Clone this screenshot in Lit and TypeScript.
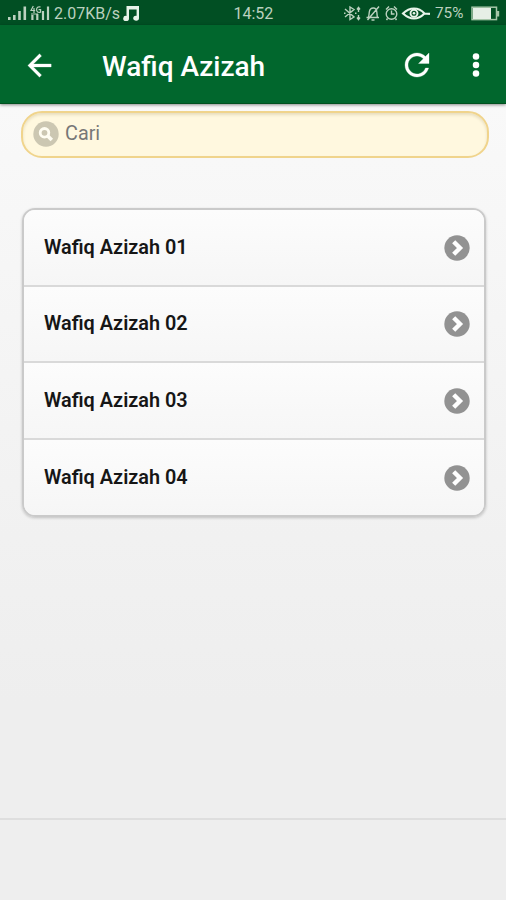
import { LitElement, html, css } from "lit";
import { customElement, property } from "lit/decorators.js";

@customElement("status-bar")
class StatusBar extends LitElement {
  static styles = css`
    :host {
      display: flex;
      align-items: center;
      justify-content: space-between;
      height: 25px;
      padding: 0 6px 0 7px;
      background: #014f23;
      color: #bbd1bf;
      font: 16px/25px Roboto, sans-serif;
    }
    .group { display: flex; align-items: center; height: 25px; }
    .left, .right { flex: 1 1 0; }
    .right { justify-content: flex-end; }
    .text { padding-top: 2px; white-space: nowrap; }
    .speed { width: 66px; margin-left: 4px; }
    .clock { width: 40px; }
    .level { width: 30px; margin: 0 6px 0 4px; font-size: 15.3px; }
    svg { display: block; flex: none; }
    .music { margin-left: 3px; }
  `;
  render() {
    return html`
      <div class="group left">
        <svg width="43" height="25" viewBox="0 0 43 25" fill="none" stroke="currentColor">
          <path stroke-width="2.6" d="M2.3 17v3M7.3 15v5M12.5 11v9M17.8 6.5V20" />
          <path stroke-width="2.2" d="M25.4 15v5M30.3 14v6M36 11v9M41 6.5V20" />
          <path stroke-width="1.2" d="M26.3 6l-2.3 4.5h4.2M27 8v5M33.6 7q-4-1-4 2.6t4 2.6V9.6h-2M24 14h7" />
        </svg>
        <span class="text speed">2.07KB/s</span>
        <svg class="music" width="17" height="25" viewBox="0 0 17 25">
          <path fill="#e8f3e9" d="M3.5 6H16v12.2a2.9 2.5 0 1 1-2.4-2.5V9.5H6v9a2.9 2.6 0 1 1-2.5-2.6z" />
        </svg>
      </div>
      <div class="group"><span class="text clock">14:52</span></div>
      <div class="group right">
        <svg width="88" height="25" viewBox="343 0 88 25" fill="none" stroke="currentColor" stroke-width="1.4">
          <path d="M345 9l9 8-4 2.500V7l4 2.500-9 7.500M344 13.200h1.500M355 13.200h1.500M358.500 8v4M358.500 15v4M357 9.500l1.500-2 1.500 2M357 17.500l1.500 2 1.500-2" />
          <path d="M366.500 17.500h12.500M368.500 17q.5-1.500.8-5 .6-4 4-4 3.200 0 3.500 4l.5 5M371.500 20h3M379 6.500L367.500 20" />
          <circle cx="391.500" cy="14" r="5.300" />
          <path d="M391.500 10.500V14h3M386 9.500l3-3M397 9.500l-3-3M387.500 18.500l-1 1.500M395.500 18.500l1 1.500" />
          <g stroke="#e8f3e9">
            <path stroke-width="2.1" d="M403 13.500q5-5 11-5t10.500 5q-5 5-10.500 5t-11-5zM424 13.500l6 .4" />
            <circle cx="414" cy="13.300" r="3.500" stroke-width="1.900" />
            <circle cx="414" cy="13.300" r="1.300" fill="#e8f3e9" stroke="none" />
          </g>
        </svg>
        <span class="text level">75%</span>
        <svg width="29" height="25" viewBox="0 0 29 25">
          <rect x="1" y="7.200" width="24.500" height="12.400" fill="none" stroke="#a5c6a8" stroke-width="1.500" />
          <rect x="2" y="8" width="18" height="11" fill="#e6efe6" />
          <path d="M26 11h2.200v5.500H26z" fill="#a5c6a8" />
        </svg>
      </div>
    `;
  }
}

@customElement("title-bar")
class TitleBar extends LitElement {
  @property() heading = "";
  static styles = css`
    :host {
      display: flex;
      align-items: center;
      height: 78px;
      padding: 0 13px 0 22px;
      border-bottom: 1px solid #01511f;
      background: #01672d;
      box-shadow: 0 1px 3px rgba(0, 0, 0, 0.45);
      color: #fff;
      position: relative;
    }
    .title {
      flex: 1;
      margin: 5px 0 0 45px;
      font: 500 28px/36px Roboto, sans-serif;
      white-space: nowrap;
    }
    svg { display: block; fill: #fff; flex: none; margin-top: 2px; }
    .more { margin-left: 24px; }
  `;
  render() {
    return html`
      <svg width="35" height="35" viewBox="0 0 24 24">
        <path d="M20 11H7.830l5.590-5.590L12 4l-8 8 8 8 1.410-1.410L7.830 13H20v-2z" stroke="#fff" stroke-width=".2" />
      </svg>
      <div class="title">${this.heading}</div>
      <svg width="36" height="36" viewBox="0 0 24 24">
        <path d="M17.650 6.350C16.200 4.900 14.210 4 12 4c-4.420 0-7.990 3.580-7.990 8s3.570 8 7.990 8c3.730 0 6.840-2.550 7.730-6h-2.080c-.82 2.330-3.040 4-5.650 4-3.310 0-6-2.690-6-6s2.690-6 6-6c1.660 0 3.140.69 4.220 1.780L13 11h7V4l-2.350 2.350z" stroke="#fff" stroke-width=".2" />
      </svg>
      <svg class="more" width="34" height="34" viewBox="0 0 24 24">
        <circle cx="12" cy="6" r="2.300" /><circle cx="12" cy="12" r="2.300" /><circle cx="12" cy="18" r="2.300" />
      </svg>
    `;
  }
}

@customElement("app-root")
class AppRoot extends LitElement {
  items = ["Wafiq Azizah 01", "Wafiq Azizah 02", "Wafiq Azizah 03", "Wafiq Azizah 04"];
  static styles = css`
    :host {
      display: flex;
      flex-direction: column;
      height: 900px;
      font-family: Roboto, sans-serif;
    }
    .page {
      flex: 1;
      display: flex;
      flex-direction: column;
      background: linear-gradient(#f9f9f9, #eee 75%);
    }
    .search {
      display: flex;
      align-items: center;
      box-sizing: border-box;
      width: 468px;
      height: 47px;
      margin: 7px 0 0 21px;
      padding: 0 9px 2px 10px;
      border: 2px solid #f0d48c;
      border-radius: 21px;
      background: #fff8df;
      box-shadow: inset 0 2px 3px rgba(90, 70, 0, 0.14);
      color: #777;
      font-size: 19.8px;
    }
    .search svg { margin-right: 6px; }
    .search span { margin-top: -1px; }
    .list {
      box-sizing: border-box;
      width: 464px;
      height: 309px;
      margin: 50px 0 0 22px;
      border: 2px solid #cacaca;
      border-radius: 13px;
      box-shadow: 0 1px 3px rgba(0, 0, 0, 0.2);
      overflow: hidden;
      display: grid;
      grid-template-rows: 77px 76px 77px 1fr;
    }
    .row {
      display: flex;
      align-items: center;
      justify-content: space-between;
      box-sizing: border-box;
      padding: 0 14px 0 20px;
      border-bottom: 2px solid #d9d9d9;
      background: linear-gradient(#fcfcfc, #f6f6f6);
      color: #161616;
      font-size: 19.85px;
      font-weight: 600;
    }
    .row:last-child { border-bottom: 0; }
    .label { margin-top: -1px; }
    svg { display: block; }
    .footer {
      height: 80px;
      margin-top: auto;
      border-top: 2px solid #dedede;
      background: #eee;
    }
  `;
  render() {
    return html`
      <status-bar></status-bar>
      <title-bar heading="Wafiq Azizah"></title-bar>
      <div class="page">
        <div class="search">
          <svg width="26" height="26" viewBox="0 0 26 26">
            <circle cx="13" cy="13" r="12.700" fill="#ccc7b2" />
            <circle cx="11.500" cy="11.800" r="4.300" fill="none" stroke="#fffdf2" stroke-width="2.800" />
            <path d="M14.800 15l4 4" stroke="#fffdf2" stroke-width="3.600" />
          </svg>
          <span>Cari</span>
        </div>
        <div class="list">
          ${this.items.map((item) => html`
            <div class="row">
              <span class="label">${item}</span>
              <svg width="26" height="26" viewBox="0 0 26 26">
                <circle cx="13" cy="13" r="12.700" fill="#929292" />
                <path d="M9.700 6.700l6.300 6.300-6.300 6.300" fill="none" stroke="#fff" stroke-width="4.400" />
              </svg>
            </div>`)}
        </div>
        <div class="footer"></div>
      </div>
    `;
  }
}
